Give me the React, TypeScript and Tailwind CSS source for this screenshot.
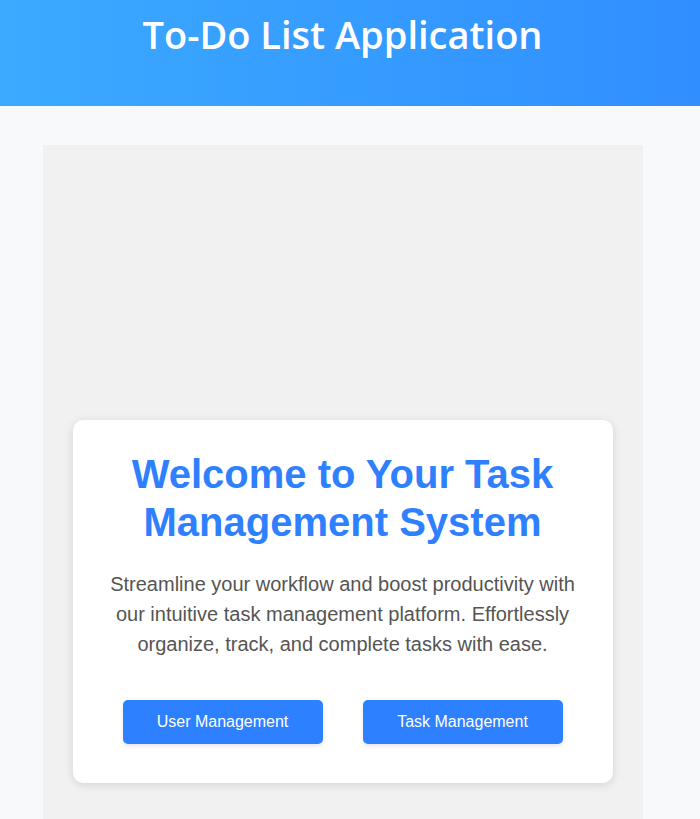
export default function App() {
  return (
    <div className="min-h-screen bg-[#f8f9fb]">
      <header className="h-[106px] bg-gradient-to-r from-[#3caaff] to-[#318eff] pr-[15px] pt-[6px] text-center">
        <h1
          className="text-[38px] font-semibold text-white"
          style={{ fontFamily: '"Segoe UI", "Open Sans", sans-serif' }}
        >
          To-Do List Application
        </h1>
      </header>

      <main className="pr-[15px] pt-[39px]">
        <section className="mx-auto w-[600px] bg-[#f1f1f1] px-[30px] pb-[60px] pt-[275px]">
          <div
            className="rounded-[10px] bg-white px-[30px] pb-[39px] pt-[30px] text-center shadow-[0_2px_10px_rgba(0,0,0,0.12)]"
            style={{ fontFamily: '"Liberation Sans", Arial, sans-serif' }}
          >
            <h2 className="text-[40px] font-bold leading-[48px] text-[#2f80ff]">
              Welcome to Your Task
              <br />
              Management System
            </h2>
            <p className="mt-[23px] text-[20px] leading-[30px] text-[#555]">
              Streamline your workflow and boost productivity with our intuitive task management
              platform. Effortlessly organize, track, and complete tasks with ease.
            </p>
            <div className="mt-[41px] flex justify-center gap-10">
              <button className="h-[44px] w-[200px] rounded-[5px] bg-[#2d80ff] text-[16px] text-white shadow-[0_2px_4px_rgba(0,0,0,0.1)]">
                User Management
              </button>
              <button className="h-[44px] w-[200px] rounded-[5px] bg-[#2d80ff] text-[16px] text-white shadow-[0_2px_4px_rgba(0,0,0,0.1)]">
                Task Management
              </button>
            </div>
          </div>
        </section>
      </main>
    </div>
  );
}
